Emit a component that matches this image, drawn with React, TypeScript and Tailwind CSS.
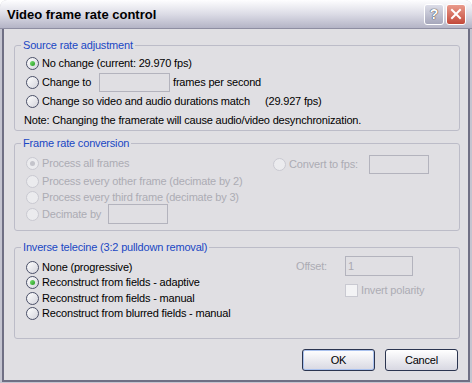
import React from "react";

type RadioProps = { checked?: boolean; disabled?: boolean };

function Radio({ checked, disabled }: RadioProps) {
  return (
    <span
      className={
        disabled
          ? "w-[13px] h-[13px] shrink-0 rounded-full border border-[#c9c9d1] bg-[#ebebee] flex items-center justify-center"
          : "w-[13px] h-[13px] shrink-0 rounded-full border border-[#4b5068] bg-linear-to-br from-white to-[#d4d4dc] flex items-center justify-center"
      }
    >
      {checked &&
        (disabled ? (
          <span className="w-[5px] h-[5px] rounded-full bg-[#c4c4cb]" />
        ) : (
          <span className="w-[5px] h-[5px] rounded-full bg-linear-to-br from-[#7be374] to-[#1f9b1c]" />
        ))}
    </span>
  );
}

function Field({ w, h, value }: { w: string; h: string; value?: string }) {
  return (
    <span className={`${w} ${h} shrink-0 border border-[#b3b3bd] bg-[#e0dfe3] pl-[2px] flex items-center text-[#a9a9b1]`}>
      {value}
    </span>
  );
}

function Legend({ children }: { children: React.ReactNode }) {
  return <legend className="ml-[6px] px-[2px] text-[#1a47c4] leading-[13px]">{children}</legend>;
}

const dim = "text-[#acacb4]";

export default function App() {
  return (
    <div className="w-[472px] h-[383px] bg-white font-['Liberation_Sans',Arial,sans-serif] text-[11px] leading-[13px] tracking-[-0.18px] text-black">
      <div className="w-full h-full flex flex-col rounded-t-[7px] overflow-hidden bg-[#c4c4d0]">
        {/* Title bar */}
        <div className="h-[29px] shrink-0 flex items-center pl-[7px] pr-[6px] gap-[2px] border-b border-[#8e8ea2] bg-linear-to-b from-[#fefeff] via-[#dcdce6] to-[#b4b4c6]">
          <span className="flex-1 text-[13px] font-bold leading-none tracking-normal pt-[1px]">Video frame rate control</span>
          <span className="w-[20px] h-[21px] rounded-[3px] border border-white bg-linear-to-b from-[#dcdde8] to-[#a6a7bb] flex items-center justify-center text-white font-bold text-[14px] [text-shadow:0_0_1px_#333,0_0_1px_#333]">
            ?
          </span>
          <span className="w-[20px] h-[21px] rounded-[3px] border border-white bg-linear-to-b from-[#e99a8c] to-[#c2483a] flex items-center justify-center">
            <svg width="12" height="12" viewBox="0 0 12 12">
              <path d="M2 2 L10 10 M10 2 L2 10" stroke="white" strokeWidth="2" strokeLinecap="square" />
            </svg>
          </span>
        </div>

        {/* Client area */}
        <div className="flex-1 mx-[2px] mb-[1px] border-x-2 border-b-2 border-[#6f6f84] bg-[#e0dfe3] pl-[10px] pr-[8px] pt-[10px] flex flex-col">
          {/* Source rate adjustment */}
          <fieldset className="border border-[#bcbcc8] rounded-[3px] pt-[2px]">
            <Legend>Source rate adjustment</Legend>
            <div className="h-[19px] flex items-center pl-[11px] gap-[3px]">
              <Radio checked />
              <span>No change (current: 29.970 fps)</span>
            </div>
            <div className="h-[19px] flex items-center pl-[11px]">
              <span className="w-[73px] flex items-center gap-[3px]">
                <Radio />
                <span>Change to</span>
              </span>
              <Field w="w-[71px]" h="h-[19px]" />
              <span className="ml-[3px]">frames per second</span>
            </div>
            <div className="h-[19px] flex items-center pl-[11px]">
              <span className="w-[239px] flex items-center gap-[3px] whitespace-nowrap">
                <Radio />
                <span>Change so video and audio durations match</span>
              </span>
              <span>(29.927 fps)</span>
            </div>
            <div className="h-[19px] flex items-center pl-[9px]">
              Note: Changing the framerate will cause audio/video desynchronization.
            </div>
          </fieldset>

          {/* Frame rate conversion */}
          <fieldset className="mt-[6px] border border-[#bcbcc8] rounded-[3px] pt-[4px] pb-[6px]">
            <Legend>Frame rate conversion</Legend>
            <div className={`flex ${dim}`}>
              <div className="w-[258px] pl-[11px] flex flex-col">
                <div className="h-[18px] flex items-center gap-[3px]">
                  <Radio checked disabled />
                  <span>Process all frames</span>
                </div>
                <div className="h-[18px] flex items-center gap-[3px]">
                  <Radio disabled />
                  <span>Process every other frame (decimate by 2)</span>
                </div>
                <div className="h-[14px] flex items-center gap-[3px]">
                  <Radio disabled />
                  <span>Process every third frame (decimate by 3)</span>
                </div>
                <div className="h-[20px] flex items-center">
                  <span className="w-[82px] flex items-center gap-[3px]">
                    <Radio disabled />
                    <span>Decimate by</span>
                  </span>
                  <Field w="w-[60px]" h="h-[20px]" />
                </div>
              </div>
              <div className="pt-[1px]">
                <div className="h-[19px] flex items-center">
                  <Radio disabled />
                  <span className="w-[83px] pl-[3px]">Convert to fps:</span>
                  <Field w="w-[60px]" h="h-[19px]" />
                </div>
              </div>
            </div>
          </fieldset>

          {/* Inverse telecine */}
          <fieldset className="mt-[10px] border border-[#bcbcc8] rounded-[3px] pt-[5px] pb-[17px]">
            <Legend>Inverse telecine (3:2 pulldown removal)</Legend>
            <div className="flex">
              <div className="flex-1 pl-[11px] flex flex-col">
                <div className="h-[16px] flex items-center gap-[3px]">
                  <Radio />
                  <span>None (progressive)</span>
                </div>
                <div className="h-[15px] flex items-center gap-[3px]">
                  <Radio checked />
                  <span>Reconstruct from fields - adaptive</span>
                </div>
                <div className="h-[16px] flex items-center gap-[3px]">
                  <Radio />
                  <span>Reconstruct from fields - manual</span>
                </div>
                <div className="h-[15px] flex items-center gap-[3px]">
                  <Radio />
                  <span>Reconstruct from blurred fields - manual</span>
                </div>
              </div>
              <div className={`w-[123px] mr-[46px] -mt-[3px] flex flex-col ${dim}`}>
                <div className="h-[20px] flex items-center justify-end gap-[18px]">
                  <span>Offset:</span>
                  <Field w="w-[68px]" h="h-[20px]" value="1" />
                </div>
                <div className="mt-[8px] h-[13px] pl-[55px] flex items-center gap-[3px] whitespace-nowrap">
                  <span className="w-[13px] h-[13px] shrink-0 border border-[#c9c9d1] bg-[#f3f3f5]" />
                  <span>Invert polarity</span>
                </div>
              </div>
            </div>
          </fieldset>

          {/* Buttons */}
          <div className="mt-[10px] mr-[2px] flex justify-end gap-[10px]">
            <button className="w-[73px] h-[22px] rounded-[3px] border border-[#2b3550] bg-linear-to-b from-white to-[#d8d8e2] shadow-[inset_0_0_0_1px_#a9c1ee] leading-none">
              OK
            </button>
            <button className="w-[73px] h-[22px] rounded-[3px] border border-[#2b3550] bg-linear-to-b from-white to-[#d8d8e2] leading-none">
              Cancel
            </button>
          </div>
        </div>
      </div>
    </div>
  );
}
